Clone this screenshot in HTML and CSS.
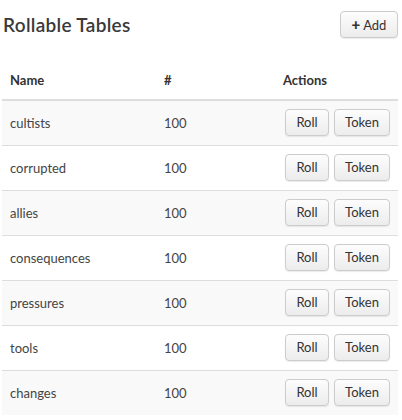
FILE: index.html
```html
<!DOCTYPE html>
<html>
<head>
<meta charset="utf-8">
<link rel="stylesheet" href="styles.css">
</head>
<body>
<div class="page">
  <div class="topbar">
    <h1 class="title">Rollable Tables</h1>
    <button class="btn btn-add"><span class="plus">+</span> Add</button>
  </div>
  <table class="tbl">
    <thead>
      <tr><th class="c-name">Name</th><th class="c-num">#</th><th class="c-act">Actions</th></tr>
    </thead>
    <tbody>
      <tr><td>cultists</td><td>100</td><td class="acts"><button class="btn b-roll">Roll</button><button class="btn b-token">Token</button></td></tr>
      <tr><td>corrupted</td><td>100</td><td class="acts"><button class="btn b-roll">Roll</button><button class="btn b-token">Token</button></td></tr>
      <tr><td>allies</td><td>100</td><td class="acts"><button class="btn b-roll">Roll</button><button class="btn b-token">Token</button></td></tr>
      <tr><td>consequences</td><td>100</td><td class="acts"><button class="btn b-roll">Roll</button><button class="btn b-token">Token</button></td></tr>
      <tr><td>pressures</td><td>100</td><td class="acts"><button class="btn b-roll">Roll</button><button class="btn b-token">Token</button></td></tr>
      <tr><td>tools</td><td>100</td><td class="acts"><button class="btn b-roll">Roll</button><button class="btn b-token">Token</button></td></tr>
      <tr><td>changes</td><td>100</td><td class="acts"><button class="btn b-roll">Roll</button><button class="btn b-token">Token</button></td></tr>
    </tbody>
  </table>
</div>
</body>
</html>
```

FILE: styles.css
```css
* { box-sizing: border-box; }
html, body { margin: 0; padding: 0; background: #fff; }
body {
  font-family: Lato, "Open Sans", "Liberation Sans", sans-serif;
  font-size: 13px;
  color: #444;
}
.page { margin: 0 4px 0 2px; }
.topbar {
  display: flex;
  justify-content: space-between;
  align-items: center;
  padding-top: 11px;
}
.title {
  margin: 0 0 0 1px;
  font-size: 19px;
  font-weight: 600;
  color: #3a3a3a;
  line-height: 27px;
  letter-spacing: 0.3px;
}
.btn {
  font-family: inherit;
  font-size: 13px;
  color: #333;
  height: 27px;
  padding: 0;
  border: 1px solid #ccc;
  border-radius: 4px;
  background: linear-gradient(#fdfdfd, #ececec);
  box-shadow: 0 1px 1px rgba(0,0,0,0.08);
  vertical-align: middle;
  line-height: 25px;
}
.btn-add { width: 58px; }
.plus { font-weight: 900; font-size: 15px; }
.tbl {
  width: 100%;
  border-collapse: collapse;
  margin-top: 24px;
}
.tbl th {
  text-align: left;
  font-weight: 700;
  color: #333;
  padding: 8px;
  line-height: 21px;
  border-bottom: 2px solid #ddd;
}
.c-name { width: 154px; }
.c-num { width: 119px; }
.tbl tbody tr { height: 45px; }
.tbl td {
  padding: 0 8px;
  line-height: 20px;
  vertical-align: middle;
  border-top: 1px solid #ddd;
}
.tbl tbody tr:first-child td { border-top: 0; }
.tbl tbody tr:nth-child(odd) { background: #f9f9f9; }
.acts { text-align: right; white-space: nowrap; }
.b-roll { width: 44px; }
.b-token { width: 56px; margin-left: 5px; }
```
